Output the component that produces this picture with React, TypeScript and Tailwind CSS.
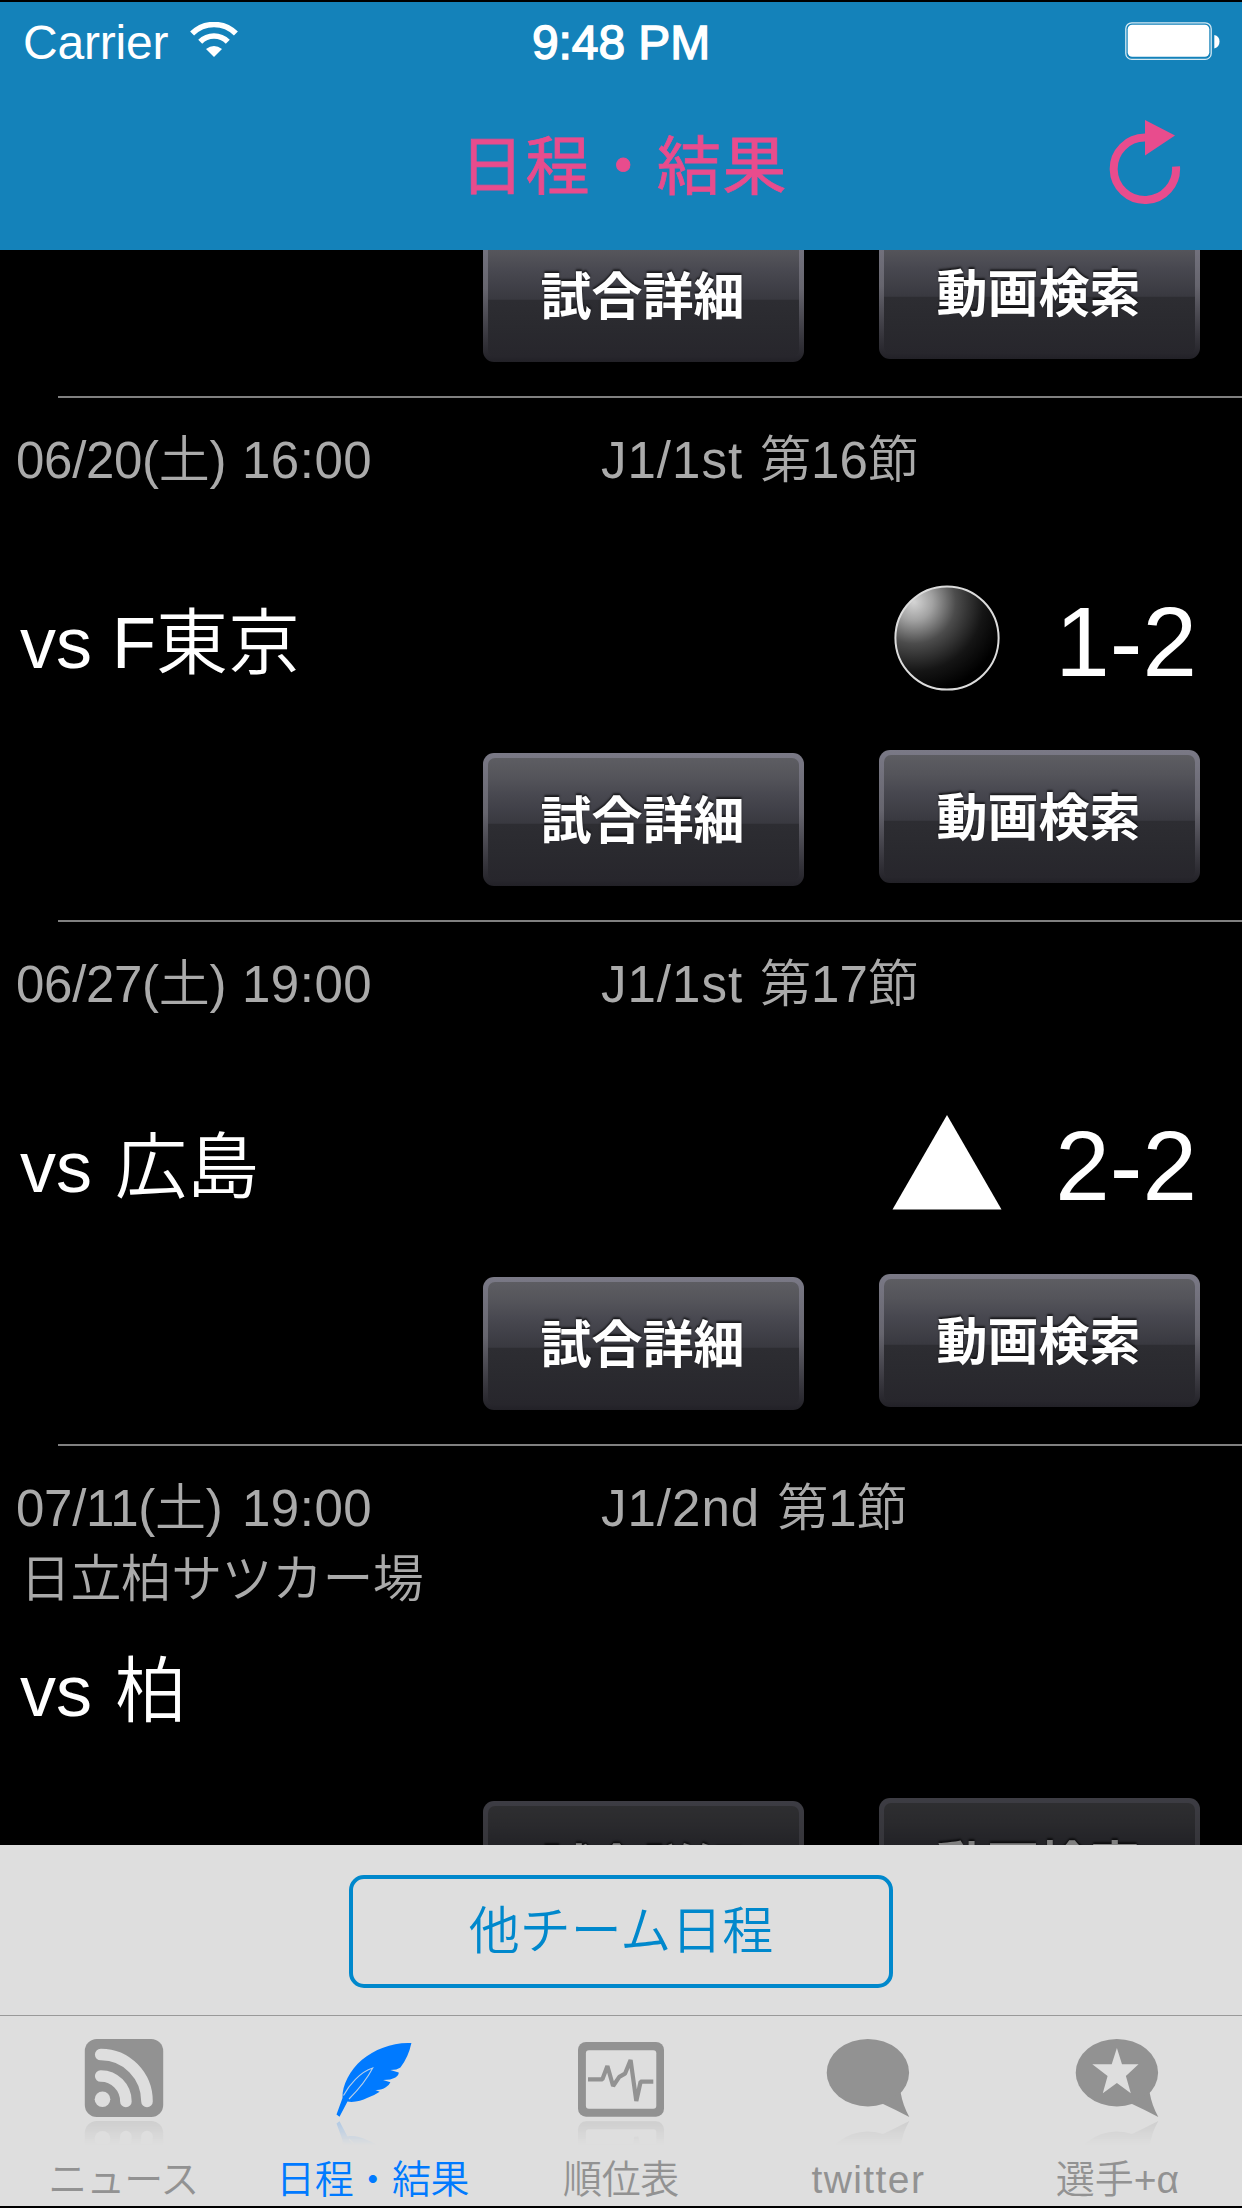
import React from "react";

type Result = "loss" | "draw";

interface Match {
  date: string;
  time: string;
  league: string;
  round: string;
  venue?: string;
  opponent: string;
  opponentGap: string;
  result?: Result;
  score?: string;
}

const matches: Match[] = [
  { date: "06/20(土)", time: "16:00", league: "J1/1st", round: "第16節", opponent: "F東京", opponentGap: "ml-[20px]", result: "loss", score: "1-2" },
  { date: "06/27(土)", time: "19:00", league: "J1/1st", round: "第17節", opponent: "広島", opponentGap: "ml-[23px]", result: "draw", score: "2-2" },
  { date: "07/11(土)", time: "19:00", league: "J1/2nd", round: "第1節", venue: "日立柏サツカー場", opponent: "柏", opponentGap: "ml-[23px]" },
];

function WifiIcon() {
  return (
    <svg className="h-[36px] w-[48px]" viewBox="0 0 48 36" fill="none" stroke="#fff">
      <path d="M2.1 11.6 A31 31 0 0 1 45.9 11.6" strokeWidth="5.6" />
      <path d="M10.2 19.7 A19.5 19.5 0 0 1 37.8 19.7" strokeWidth="5.6" />
      <path d="M24 35 L16 27 Q24 21 32 27 Z" fill="#fff" stroke="none" />
    </svg>
  );
}

function BatteryIcon() {
  return (
    <svg className="h-[40px] w-[96px]" viewBox="0 0 96 40">
      <rect x="0.8" y="0.8" width="85.4" height="36.6" rx="6" fill="none" stroke="#d5e9f3" strokeWidth="1.3" />
      <rect x="2.7" y="2.8" width="81.6" height="32" rx="4.5" fill="#fff" />
      <path d="M89.3 13 Q94.5 14 94.5 19.5 Q94.5 25 89.3 26.5 Z" fill="#fff" />
    </svg>
  );
}

function RefreshIcon() {
  return (
    <svg className="h-[86px] w-[72px]" viewBox="0 0 72 86">
      <path d="M36 17.6 A31.2 31.2 0 1 0 67 46.5" fill="none" stroke="#e84c8d" strokeWidth="8" />
      <path d="M36 0 L66 15.5 L36 35.5 Z" fill="#e84c8d" />
    </svg>
  );
}

function ResultIcon({ result }: { result: Result }) {
  if (result === "draw") {
    return (
      <svg className="mt-[6px] h-[95px] w-[110px]" viewBox="0 0 110 95">
        <path d="M55 0 L109.5 94.5 H0.5 Z" fill="#fff" />
      </svg>
    );
  }
  return (
    <svg className="h-[106px] w-[110px]" viewBox="0 0 110 106">
      <defs>
        <radialGradient id="ball" cx="0.18" cy="0.15" r="0.9">
          <stop offset="0" stopColor="#d4d4d4" />
          <stop offset="0.2" stopColor="#a2a2a2" />
          <stop offset="0.45" stopColor="#4c4c4c" />
          <stop offset="0.75" stopColor="#151515" />
          <stop offset="1" stopColor="#000" />
        </radialGradient>
      </defs>
      <circle cx="55" cy="53" r="51.6" fill="url(#ball)" stroke="#dcdcdc" strokeWidth="2" />
    </svg>
  );
}

function GlossButton({ label, className }: { label: string; className: string }) {
  return (
    <button
      className={`h-[133px] w-[321px] rounded-[11px] bg-linear-to-b from-[#7a7986] via-[#66656e] via-45% to-[#222127] p-[5px] ${className}`}
    >
      <span className="flex h-full w-full items-center justify-center rounded-[7px] bg-[linear-gradient(to_bottom,#5d5d62_0%,#54545a_16%,#484850_30%,#393940_53%,#2d2d32_54%,#2a2a2f_75%,#27262c_100%)] pt-[4px] pr-[2px] text-[51px] leading-[60px] font-bold text-white [text-shadow:0_-2px_2px_rgba(0,0,0,.65)]">
        <span>{label}</span>
      </span>
    </button>
  );
}

function RowActions({ disabled = false }: { disabled?: boolean }) {
  return (
    <div className={`flex h-[170px] shrink-0 items-start pl-[483px] ${disabled ? "opacity-50" : ""}`}>
      <GlossButton label="試合詳細" className="mt-[3px]" />
      <GlossButton label="動画検索" className="ml-[75px]" />
    </div>
  );
}

function Separator() {
  return <div className="ml-[58px] h-[2px] shrink-0 bg-[#808080]" />;
}

function MatchRow({ match }: { match: Match }) {
  return (
    <li className="flex h-[524px] shrink-0 flex-col">
      <div className="h-[187px] pt-[33px] text-[51px] leading-[60px] font-[350] text-[#aaa]">
        <div className="flex">
          <div className="flex w-[601px] pl-[16px]">
            <span className="w-[226px] tracking-[-0.3px]">{match.date}</span>
            <span className="tracking-[0.5px]">{match.time}</span>
          </div>
          <span className="tracking-[1px]">{match.league}</span>
          <span className="ml-[17px]">{match.round}</span>
        </div>
        {match.venue && <div className="mt-[11px] pl-[20px] tracking-[-0.6px]">{match.venue}</div>}
      </div>
      <div className="flex h-[165px] items-start">
        <div className="flex w-[892px] pt-[18px] pl-[20px] text-[72px] leading-[80px] font-[350] text-white">
          <span>vs</span>
          <span className={match.opponentGap}>{match.opponent}</span>
        </div>
        {match.result && <ResultIcon result={match.result} />}
        {match.score && (
          <span className="mr-[45px] ml-auto pt-[2px] text-[98px] leading-[110px] text-white">{match.score}</span>
        )}
      </div>
      <RowActions disabled={!match.score} />
      <Separator />
    </li>
  );
}

const GRAY = "#929292";
const BAR = "#dedede";

const newsShape = (
  <>
    <rect x="2.8" y="0" width="78.4" height="78" rx="12" fill={GRAY} />
    <circle cx="20.5" cy="60.3" r="7.8" fill={BAR} />
    <path d="M18.7 37 A25 25.5 0 0 1 43.9 62.5 M18.7 15.5 A46 47 0 0 1 65 62.5" fill="none" stroke={BAR} strokeWidth="11.6" strokeLinecap="round" />
  </>
);

const featherShape = (
  <>
    <path
      d="M80.4 4 C62 3 44 10 31 20.7 C19 31 11 46 11.5 59 L5.5 75.5 L8.5 77.8 L16.5 62.5 C23 63.8 31 61.5 36 59 Q44 56 48.7 52.7 L44.4 50.9 Q51 51.2 54.4 48.5 Q58.5 46 59.4 43.3 L52 41 Q60 41 64.4 38.5 Q68 36 67.7 33.5 L59.4 31 Q66 31 69.4 28.5 Q77.5 18 80.4 4 Z"
      fill="#007aff"
    />
    <path d="M12.5 56.5 C18 46 29 33 41.7 29 C36 40 28 50 18 60" fill="none" stroke="#b9cfe8" strokeWidth="1.1" />
  </>
);

const chartShape = (
  <>
    <rect x="-1" y="3" width="86" height="74.7" rx="8" fill={GRAY} />
    <rect x="6.9" y="11.2" width="70.4" height="58.6" rx="3" fill={BAR} />
    <path
      d="M9 40.3 H23.4 L28.4 27 L34.1 47 L40.3 37.8 L46 34.7 L51.6 21 L57.3 62 L61.6 42.7 H74.3"
      fill="none"
      stroke={GRAY}
      strokeWidth="4.2"
      strokeLinejoin="bevel"
    />
  </>
);

const bubbleShape = (
  <>
    <ellipse cx="40.9" cy="33.7" rx="41.2" ry="33.7" fill={GRAY} />
    <path d="M73.5 53 Q76 67 82.3 77.9 Q68 70.5 54 64 Z" fill={GRAY} />
  </>
);

const starBubbleShape = (
  <>
    {bubbleShape}
    <path
      d="M40.9 9 L46 25.3 H62.5 L49.9 37 L54.8 54.3 L40.9 44 L26.8 54.3 L31.6 37 L16.3 25.3 H35.7 Z"
      fill={BAR}
    />
  </>
);

const tabs = [
  { label: "ニュース", shape: newsShape, style: "text-[#929292] tracking-[-1px] pr-[2px]" },
  { label: "日程・結果", shape: featherShape, style: "text-[#007aff] tracking-[-0.4px]" },
  { label: "順位表", shape: chartShape, style: "text-[#929292] tracking-[-0.4px]" },
  { label: "twitter", shape: bubbleShape, style: "text-[#929292] tracking-[1.4px] pr-[2px]" },
  { label: "選手+α", shape: starBubbleShape, style: "text-[#929292] pr-[1px]" },
];

function TabItem({ label, shape, style }: (typeof tabs)[number]) {
  return (
    <div className="flex flex-1 flex-col items-center pt-[23px]">
      <svg className="h-[78px] w-[90px] overflow-visible" viewBox="-3 0 90 78">
        {shape}
      </svg>
      <div className="mt-[4px] h-[24px] overflow-hidden opacity-20 [mask-image:linear-gradient(to_bottom,black,transparent)]">
        <svg className="h-[78px] w-[90px] -scale-y-100 overflow-visible" viewBox="-3 0 90 78">
          {shape}
        </svg>
      </div>
      <span className={`mt-[11px] text-[39px] leading-[48px] font-[350] whitespace-nowrap ${style}`}>{label}</span>
    </div>
  );
}

export default function App() {
  return (
    <div
      lang="ja"
      className="flex h-[2208px] w-[1242px] flex-col overflow-hidden border-y-2 border-black bg-black font-['Liberation_Sans','Noto_Sans_CJK_JP',sans-serif]"
    >
      <header className="h-[248px] shrink-0 bg-[#1482ba]">
        <div className="grid h-[72px] grid-cols-3 pt-[13px] text-[48px] leading-[56px] text-white">
          <div className="flex items-start pl-[23px]">
            <span className="w-[167px] tracking-[-0.2px]">Carrier</span>
            <span className="pt-[7px]">
              <WifiIcon />
            </span>
          </div>
          <span className="text-center tracking-[-0.1px] [-webkit-text-stroke:1.4px_white]">9:48 PM</span>
          <div className="flex justify-end pt-[7px] pr-[21px]">
            <BatteryIcon />
          </div>
        </div>
        <div className="grid grid-cols-[1fr_auto_1fr]">
          <span />
          <h1 className="mt-[53px] pl-[6px] text-[64px] leading-[80px] tracking-[1.6px] text-[#e84c8d] [-webkit-text-stroke:0.8px_#e84c8d]">
            日程・結果
          </h1>
          <div className="mt-[46px] mr-[61px] justify-self-end">
            <RefreshIcon />
          </div>
        </div>
      </header>

      <main className="h-[1595px] shrink-0 overflow-hidden">
        <ul className="-mt-6 flex flex-col">
          <li>
            <RowActions />
            <Separator />
          </li>
          {matches.map((m) => (
            <MatchRow key={m.date} match={m} />
          ))}
        </ul>
      </main>

      <div className="flex h-[170px] shrink-0 items-start justify-center bg-[#dedede] pt-[30px]">
        <button className="h-[113px] w-[544px] rounded-[15px] border-4 border-[#0088cc] text-[51px] leading-[60px] font-[350] text-[#0088cc]">
          他チーム日程
        </button>
      </div>

      <nav className="flex flex-1 border-t border-[#999] bg-[#dedede]">
        {tabs.map((t) => (
          <TabItem key={t.label} {...t} />
        ))}
      </nav>
    </div>
  );
}
